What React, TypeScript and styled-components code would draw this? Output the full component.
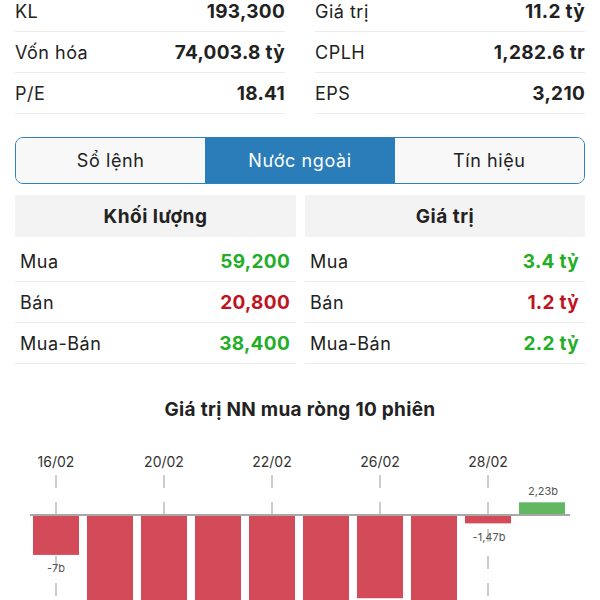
import React from 'react';
import styled, {createGlobalStyle} from 'styled-components';

const GlobalStyle = createGlobalStyle`
  body {
    margin: 0;
    background: #fff;
    font-family: Inter, "Noto Sans", sans-serif;
    color: #222;
  }
`;

const Page = styled.div`
  width: 600px;
  height: 600px;
  overflow: hidden;
  background: #fff;
`;

const Stats = styled.div`
  display: grid;
  grid-template-columns: 1fr 1fr;
  column-gap: 30px;
  padding: 0 15px;
  margin-top: -9px;
`;

const StatRow = styled.div`
  display: flex;
  justify-content: space-between;
  align-items: center;
  height: 40px;
  border-bottom: 1px solid #ececec;
  font-size: 18px;
  letter-spacing: 0.5px;
`;

const Value = styled.span<{$tone?: 'up' | 'down'}>`
  font-weight: 700;
  font-size: 19px;
  letter-spacing: 0.3px;
  color: ${p => p.$tone === 'up' ? '#22ae27' : p.$tone === 'down' ? '#c1121f' : '#222'};
`;

const Tabs = styled.div`
  display: grid;
  grid-template-columns: repeat(3, 1fr);
  margin: 23px 15px 0;
  height: 45px;
  border: 1.5px solid #2d80b9;
  border-radius: 8px;
  overflow: hidden;
`;

const Tab = styled.div<{$active?: boolean}>`
  display: flex;
  align-items: center;
  justify-content: center;
  font-size: 18px;
  letter-spacing: 0.6px;
  background: ${p => p.$active ? '#2a7db8' : '#f8f8f8'};
  color: ${p => p.$active ? '#fff' : '#222'};
`;

const Foreign = styled.div`
  display: grid;
  grid-template-columns: 281px 280px;
  column-gap: 9px;
  padding: 0 15px;
  margin-top: 11px;
`;

const HeadCell = styled.div`
  height: 42px;
  display: flex;
  align-items: center;
  justify-content: center;
  background: #f3f3f3;
  font-size: 19px;
  letter-spacing: 0.5px;
  font-weight: 700;
  margin-bottom: 4px;
`;

const TradeRow = styled.div`
  display: flex;
  justify-content: space-between;
  align-items: center;
  height: 40px;
  padding: 0 6px 0 5px;
  border-bottom: 1px solid #ececec;
  font-size: 18px;
  letter-spacing: 0.5px;
`;

const Column = styled.div`
  display: flex;
  flex-direction: column;
`;

const ChartTitle = styled.div`
  margin-top: 34px;
  text-align: center;
  font-size: 19px;
  letter-spacing: 0.3px;
  font-weight: 700;
  color: #222;
`;

const ChartSvg = styled.svg`
  display: block;
  margin-top: 19px;
`;

const stats = [
  ['KL', '193,300', 'Giá trị', '11.2 tỷ'],
  ['Vốn hóa', '74,003.8 tỷ', 'CPLH', '1,282.6 tr'],
  ['P/E', '18.41', 'EPS', '3,210'],
];

const trades: {label: string; vol: string; val: string; tone: 'up' | 'down'}[] = [
  {label: 'Mua', vol: '59,200', val: '3.4 tỷ', tone: 'up'},
  {label: 'Bán', vol: '20,800', val: '1.2 tỷ', tone: 'down'},
  {label: 'Mua-Bán', vol: '38,400', val: '2.2 tỷ', tone: 'up'},
];

// giá trị theo tỷ, âm = bán ròng
const bars = [-7, -20, -20, -20, -20, -20, -14.6, -20, -1.47, 2.23];
const ticks = [{i: 0, d: '16/02'}, {i: 2, d: '20/02'}, {i: 4, d: '22/02'}, {i: 6, d: '26/02'}, {i: 8, d: '28/02'}];

const Chart = () => {
  const base = 75;
  const scale = 5.7;
  const x0 = 33;
  const step = 54;
  const w = 46;
  return (
    <ChartSvg width="600" height="160" viewBox="0 0 600 160">
      {ticks.map(t => {
        const cx = x0 + t.i * step + w / 2;
        return (
          <g key={t.d}>
            <text x={cx} y={27} textAnchor="middle" fontSize="14" fill="#333" fontFamily="Inter, sans-serif">{t.d}</text>
            <line x1={cx} x2={cx} y1={35} y2={160} stroke="#bdbdbd" strokeWidth="1.5" strokeDasharray="13 14"/>
          </g>
        );
      })}
      {bars.map((v, i) => {
        const h = Math.abs(v) * scale;
        const x = x0 + i * step;
        return (
          <rect key={i} x={x} y={v < 0 ? base : base - h} width={w} height={h}
                fill={v < 0 ? '#d34a59' : '#62b862'}/>
        );
      })}
      <line x1={30} x2={570} y1={base} y2={base} stroke="#a8a8a8" strokeWidth="2"/>
      <text x={56} y={132} textAnchor="middle" fontSize="11" fill="#555" fontFamily="Inter, sans-serif">-7b</text>
      <text x={489} y={101} textAnchor="middle" fontSize="11" fill="#555" fontFamily="Inter, sans-serif">-1,47b</text>
      <text x={543} y={55} textAnchor="middle" fontSize="11" fill="#555" fontFamily="Inter, sans-serif">2,23b</text>
    </ChartSvg>
  );
};

const App = () => {
  return (
    <Page>
      <GlobalStyle/>
      <Stats>
        {stats.map(s => (
          <React.Fragment key={s[0]}>
            <StatRow><span>{s[0]}</span><Value>{s[1]}</Value></StatRow>
            <StatRow><span>{s[2]}</span><Value>{s[3]}</Value></StatRow>
          </React.Fragment>
        ))}
      </Stats>
      <Tabs>
        <Tab>Sổ lệnh</Tab>
        <Tab $active>Nước ngoài</Tab>
        <Tab>Tín hiệu</Tab>
      </Tabs>
      <Foreign>
        <Column>
          <HeadCell>Khối lượng</HeadCell>
          {trades.map(t => (
            <TradeRow key={t.label}><span>{t.label}</span><Value $tone={t.tone}>{t.vol}</Value></TradeRow>
          ))}
        </Column>
        <Column>
          <HeadCell>Giá trị</HeadCell>
          {trades.map(t => (
            <TradeRow key={t.label}><span>{t.label}</span><Value $tone={t.tone}>{t.val}</Value></TradeRow>
          ))}
        </Column>
      </Foreign>
      <ChartTitle>Giá trị NN mua ròng 10 phiên</ChartTitle>
      <Chart/>
    </Page>
  );
};

export default App;
